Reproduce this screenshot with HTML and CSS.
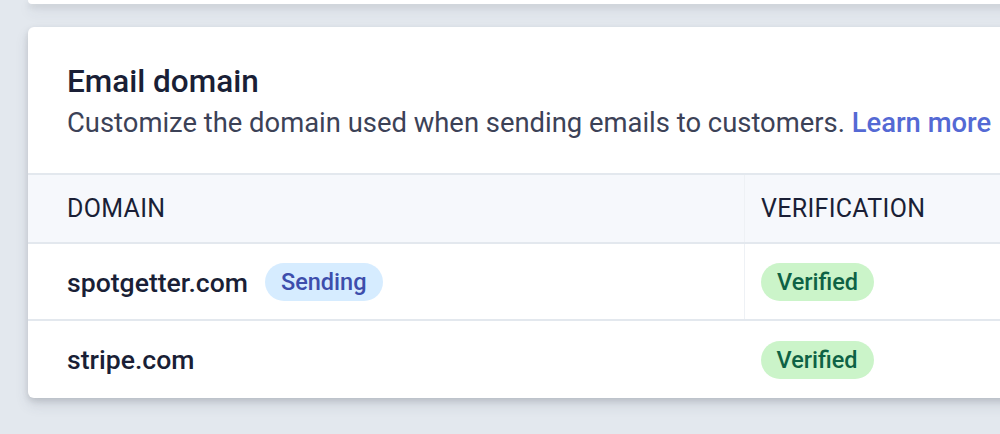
FILE: index.html
```html
<!DOCTYPE html>
<html>
<head>
<meta charset="utf-8">
<link rel="stylesheet" href="styles.css">
</head>
<body>
<div class="page">
  <div class="card card-top"></div>
  <section class="card card-main">
    <header class="card-head">
      <h2 class="title">Email domain</h2>
      <p class="subtitle">Customize the domain used when sending emails to customers. <a class="link" href="#">Learn more →</a></p>
    </header>
    <table class="table">
      <thead>
        <tr>
          <th class="col-domain">DOMAIN</th>
          <th class="col-verif">VERIFICATION</th>
        </tr>
      </thead>
      <tbody>
        <tr class="row-first">
          <td class="col-domain"><span class="domain">spotgetter.com</span><span class="badge badge-blue">Sending</span></td>
          <td class="col-verif"><span class="badge badge-green">Verified</span></td>
        </tr>
        <tr class="row-last">
          <td class="col-domain"><span class="domain">stripe.com</span></td>
          <td class="col-verif"><span class="badge badge-green">Verified</span></td>
        </tr>
      </tbody>
    </table>
  </section>
</div>
</body>
</html>
```

FILE: styles.css
```css
html, body {
  margin: 0;
  padding: 0;
  background: #e3e8ee;
  overflow: hidden;
  height: 434px;
}
body {
  font-family: Roboto, "Liberation Sans", Arial, sans-serif;
  color: #1a1f36;
}
.page {
  display: flex;
  flex-direction: column;
  gap: 23px;
  padding-left: 28px;
  width: 1100px;
}
.card {
  background: #fff;
  border-radius: 6px;
  box-shadow: 0 7px 14px 0 rgba(60, 66, 87, 0.12), 0 3px 6px 0 rgba(0, 0, 0, 0.12);
}
.card-top {
  height: 4px;
  border-radius: 0 0 6px 6px;
}
.card-main {
  overflow: hidden;
}
.card-head {
  padding: 35px 39px 32px;
}
.title {
  margin: 0;
  font-size: 31.5px;
  line-height: 40px;
  font-weight: 500;
  color: #1a1f36;
}
.subtitle {
  margin: 3px 0 0;
  font-size: 27.4px;
  line-height: 36px;
  color: #3c4257;
  white-space: nowrap;
}
.link {
  color: #5469d4;
  text-decoration: none;
  font-weight: 500;
}
.table {
  width: 100%;
  border-collapse: collapse;
}
.table th, .table td {
  text-align: left;
  padding: 0;
}
.table thead tr {
  background: #f6f8fc;
  border-top: 2px solid #e3e8ee;
  border-bottom: 2px solid #e3e8ee;
}
.table th {
  height: 67px;
  font-size: 25px;
  font-weight: 400;
  color: #1a1f36;
  letter-spacing: 0.3px;
}
.table tbody tr.row-first {
  border-bottom: 2px solid #e3e8ee;
  height: 77px;
}
.table tbody tr.row-last {
  height: 78px;
}
.col-domain {
  width: 677px;
  padding-left: 39px !important;
}
.col-verif {
  padding-left: 16px !important;
}
thead .col-verif, .row-first .col-verif {
  border-left: 1px solid #eef1f5;
}
.domain {
  font-size: 26.6px;
  font-weight: 500;
  color: #1a1f36;
  vertical-align: middle;
}
.badge {
  display: inline-block;
  vertical-align: middle;
  height: 38px;
  line-height: 38px;
  padding: 0 16px;
  border-radius: 19px;
  font-size: 23.5px;
  font-weight: 500;
}
.badge-blue {
  margin-left: 17px;
  background: #d6ecff;
  color: #3d4eac;
}
.badge-green {
  background: #cbf4c9;
  color: #0e6245;
}
```
